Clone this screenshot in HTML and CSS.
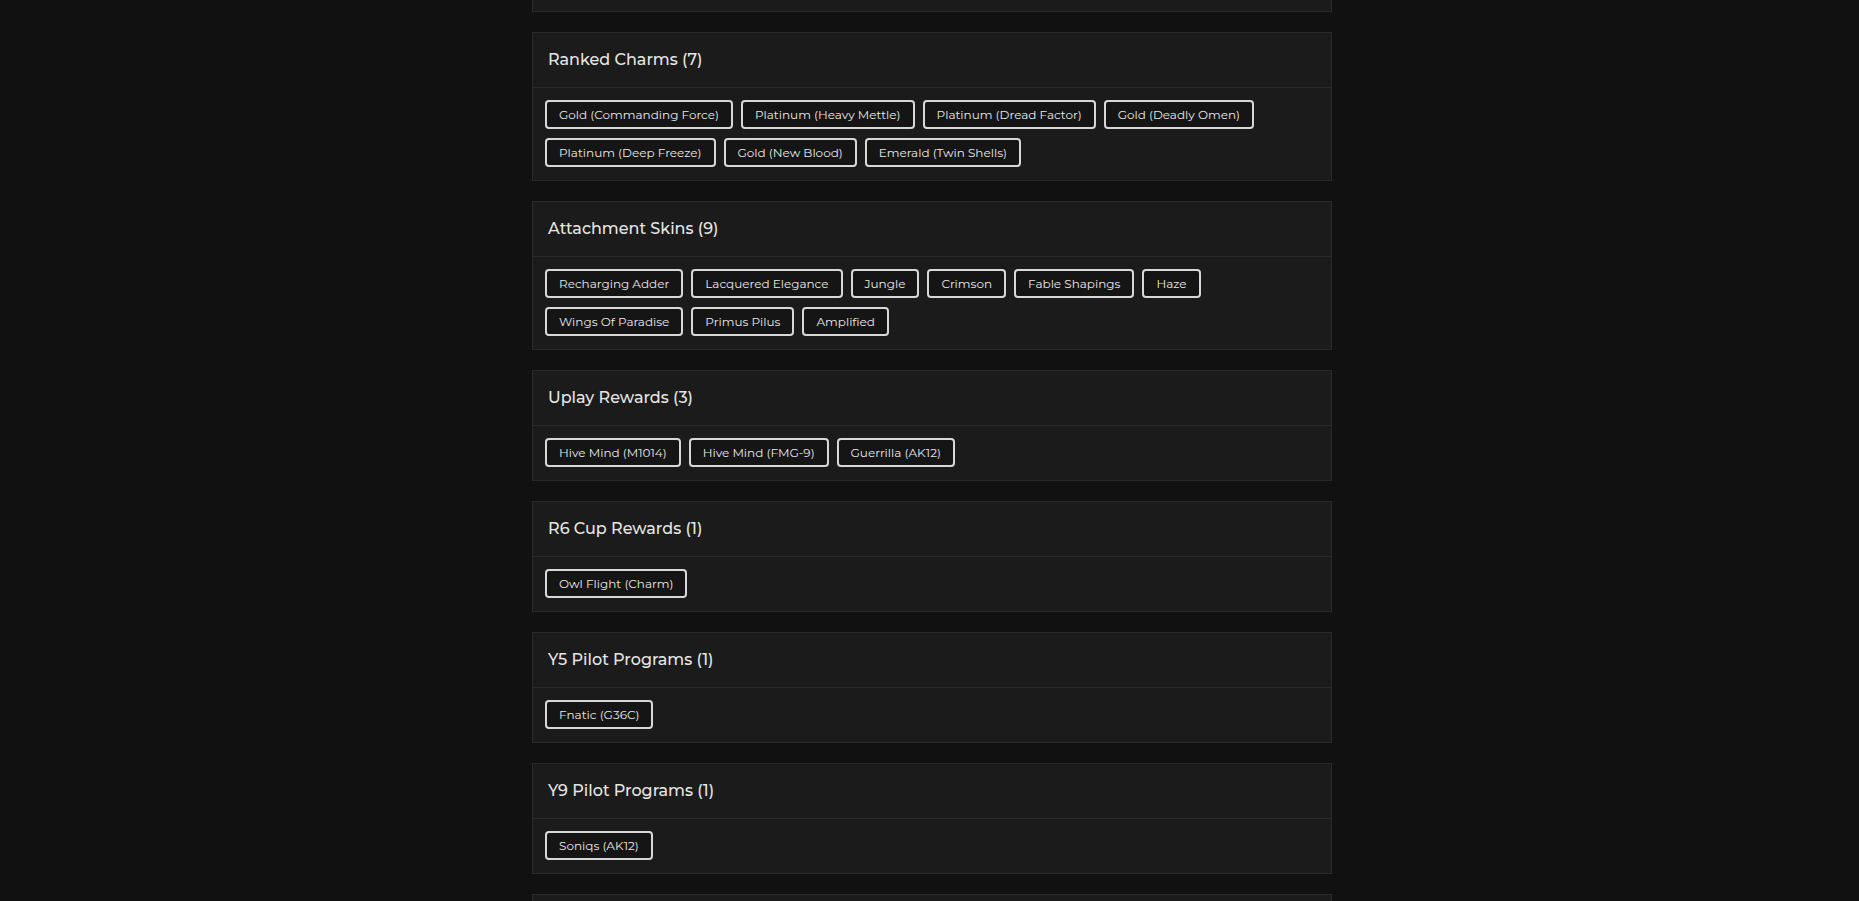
FILE: index.html
```html
<!DOCTYPE html>
<html lang="en">
<head>
<meta charset="utf-8">
<title>Items</title>
<link rel="stylesheet" href="styles.css">
</head>
<body>
<main class="wrap">
  <section class="card card-tail"></section>

  <section class="card">
    <h2 class="card-head">Ranked Charms (7)</h2>
    <div class="card-body">
      <span class="chip">Gold (Commanding Force)</span>
      <span class="chip">Platinum (Heavy Mettle)</span>
      <span class="chip">Platinum (Dread Factor)</span>
      <span class="chip">Gold (Deadly Omen)</span>
      <span class="chip">Platinum (Deep Freeze)</span>
      <span class="chip">Gold (New Blood)</span>
      <span class="chip">Emerald (Twin Shells)</span>
    </div>
  </section>

  <section class="card">
    <h2 class="card-head">Attachment Skins (9)</h2>
    <div class="card-body">
      <span class="chip">Recharging Adder</span>
      <span class="chip">Lacquered Elegance</span>
      <span class="chip">Jungle</span>
      <span class="chip">Crimson</span>
      <span class="chip">Fable Shapings</span>
      <span class="chip">Haze</span>
      <span class="chip">Wings Of Paradise</span>
      <span class="chip">Primus Pilus</span>
      <span class="chip">Amplified</span>
    </div>
  </section>

  <section class="card">
    <h2 class="card-head">Uplay Rewards (3)</h2>
    <div class="card-body">
      <span class="chip">Hive Mind (M1014)</span>
      <span class="chip">Hive Mind (FMG-9)</span>
      <span class="chip">Guerrilla (AK12)</span>
    </div>
  </section>

  <section class="card">
    <h2 class="card-head">R6 Cup Rewards (1)</h2>
    <div class="card-body">
      <span class="chip">Owl Flight (Charm)</span>
    </div>
  </section>

  <section class="card">
    <h2 class="card-head">Y5 Pilot Programs (1)</h2>
    <div class="card-body">
      <span class="chip">Fnatic (G36C)</span>
    </div>
  </section>

  <section class="card">
    <h2 class="card-head">Y9 Pilot Programs (1)</h2>
    <div class="card-body">
      <span class="chip">Soniqs (AK12)</span>
    </div>
  </section>

  <section class="card">
    <h2 class="card-head">&nbsp;</h2>
  </section>
</main>
</body>
</html>
```

FILE: styles.css
```css
html, body {
  margin: 0;
  padding: 0;
  background: #111111;
  font-family: Montserrat, Inter, "Liberation Sans", sans-serif;
  color: #e4e4e4;
}

.wrap {
  width: 800px;
  margin: 0 auto;
  padding-left: 5px;
  display: flex;
  flex-direction: column;
  gap: 20px;
}

.card {
  background: #1b1b1b;
  border: 1px solid #2a2a2a;
}

.card-tail {
  border-top: none;
  height: 11px;
}

.card-head {
  margin: 0;
  padding: 16px 15px;
  font-size: 16px;
  line-height: 22px;
  font-weight: 500;
  color: #e6e6e6;
  border-bottom: 1px solid #2a2a2a;
}

.card-body {
  padding: 12px 12px 13px;
  display: flex;
  flex-wrap: wrap;
  gap: 9px 8px;
}

.chip {
  display: inline-block;
  border: 2px solid #d8d8d8;
  border-radius: 4px;
  background: #151515;
  padding: 5px 12px;
  font-size: 12px;
  line-height: 15px;
  color: #e8e8e8;
}
```
